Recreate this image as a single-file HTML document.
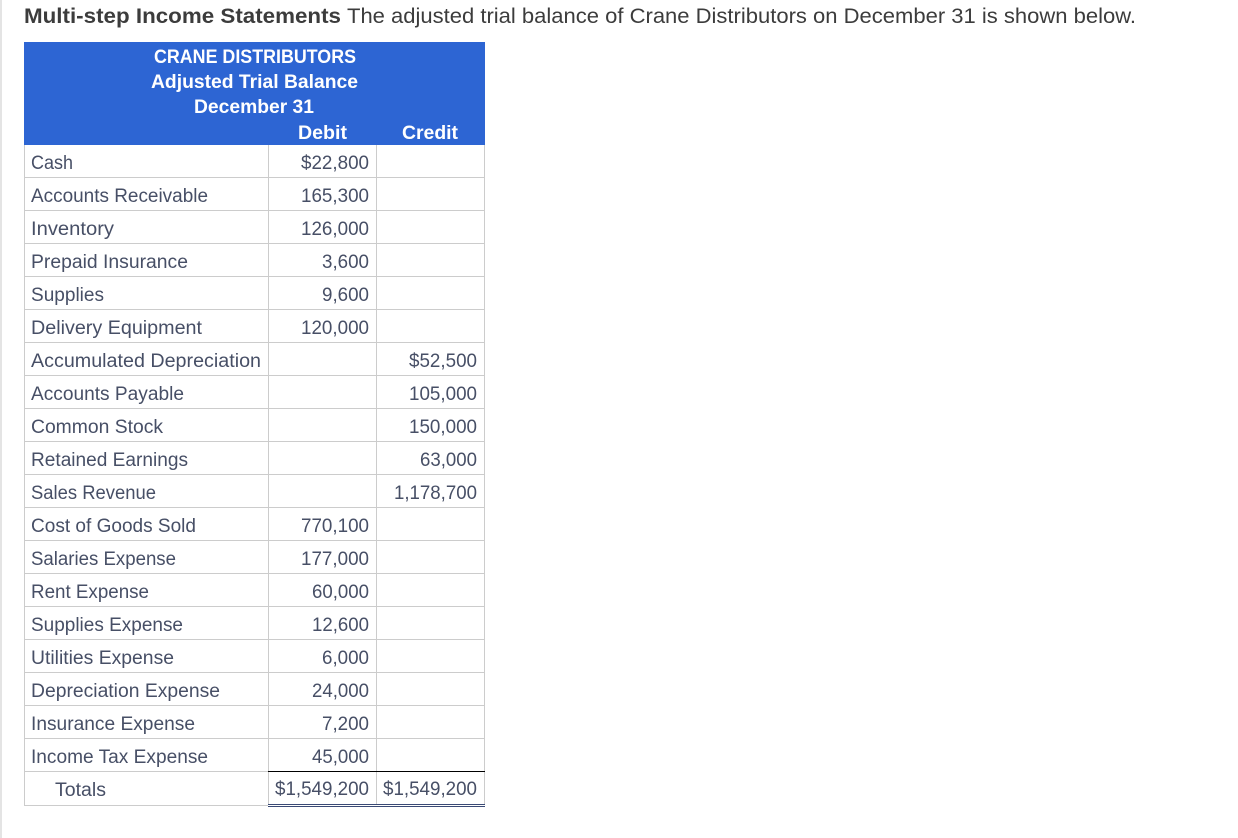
<!DOCTYPE html>
<html lang="en">
<head>
<meta charset="utf-8">
<title>Multi-step Income Statements</title>
<style>
html,body{margin:0;padding:0;background:#fff;width:1238px;height:838px;overflow:hidden}
svg{display:block;position:absolute;left:0;top:0}
text{font-family:"Liberation Sans",sans-serif;font-size:19px;fill:#474f66}
.t{font-size:21.5px;fill:#3c3c3c}
.h{font-size:19px;font-weight:bold;fill:#fff}
</style>
</head>
<body>
<svg width="1238" height="838" viewBox="0 0 1238 838" xmlns="http://www.w3.org/2000/svg">
<rect x="0" y="0" width="2" height="838" fill="#e4e4e4"/>

<text class="t" x="24" y="23" font-weight="bold" textLength="317" lengthAdjust="spacingAndGlyphs">Multi-step Income Statements</text>
<text class="t" x="347" y="23" textLength="789" lengthAdjust="spacingAndGlyphs">The adjusted trial balance of Crane Distributors on December 31 is shown below.</text>

<rect x="24" y="42" width="461" height="103" fill="#2d65d3"/>
<text class="h" x="154" y="63" textLength="202" lengthAdjust="spacingAndGlyphs">CRANE DISTRIBUTORS</text>
<text class="h" x="151" y="88" textLength="207" lengthAdjust="spacingAndGlyphs">Adjusted Trial Balance</text>
<text class="h" x="194" y="113" textLength="120" lengthAdjust="spacingAndGlyphs">December 31</text>
<text class="h" x="298" y="139" textLength="49" lengthAdjust="spacingAndGlyphs">Debit</text>
<text class="h" x="402" y="139" textLength="56" lengthAdjust="spacingAndGlyphs">Credit</text>

<g stroke="#cccccc" stroke-width="1" fill="none">
<path d="M24.5 145V805.5M268.5 145V805M376.5 145V805M484.5 145V805"/>
<path d="M24 177.5H485M24 210.5H485M24 243.5H485M24 276.5H485M24 309.5H485M24 342.5H485M24 375.5H485M24 408.5H485M24 441.5H485M24 474.5H485M24 507.5H485M24 540.5H485M24 573.5H485M24 606.5H485M24 639.5H485M24 672.5H485M24 705.5H485M24 738.5H485M24 771.5H268M24 805.5H268"/>
</g>
<path d="M268 771.5H485" stroke="#000" stroke-width="1"/>
<rect x="268" y="804" width="217" height="1" fill="#3a4a75"/>
<rect x="268" y="806" width="217" height="1" fill="#3a4a75"/>

<text x="31" y="169" textLength="42" lengthAdjust="spacingAndGlyphs">Cash</text>
<text x="31" y="202" textLength="177" lengthAdjust="spacingAndGlyphs">Accounts Receivable</text>
<text x="31" y="235" textLength="83" lengthAdjust="spacingAndGlyphs">Inventory</text>
<text x="31" y="268" textLength="157" lengthAdjust="spacingAndGlyphs">Prepaid Insurance</text>
<text x="31" y="301" textLength="73" lengthAdjust="spacingAndGlyphs">Supplies</text>
<text x="31" y="334" textLength="171" lengthAdjust="spacingAndGlyphs">Delivery Equipment</text>
<text x="31" y="367" textLength="230" lengthAdjust="spacingAndGlyphs">Accumulated Depreciation</text>
<text x="31" y="400" textLength="153" lengthAdjust="spacingAndGlyphs">Accounts Payable</text>
<text x="31" y="433" textLength="132" lengthAdjust="spacingAndGlyphs">Common Stock</text>
<text x="31" y="466" textLength="157" lengthAdjust="spacingAndGlyphs">Retained Earnings</text>
<text x="31" y="499" textLength="125" lengthAdjust="spacingAndGlyphs">Sales Revenue</text>
<text x="31" y="532" textLength="165" lengthAdjust="spacingAndGlyphs">Cost of Goods Sold</text>
<text x="31" y="565" textLength="145" lengthAdjust="spacingAndGlyphs">Salaries Expense</text>
<text x="31" y="598" textLength="118" lengthAdjust="spacingAndGlyphs">Rent Expense</text>
<text x="31" y="631" textLength="152" lengthAdjust="spacingAndGlyphs">Supplies Expense</text>
<text x="31" y="664" textLength="143" lengthAdjust="spacingAndGlyphs">Utilities Expense</text>
<text x="31" y="697" textLength="189" lengthAdjust="spacingAndGlyphs">Depreciation Expense</text>
<text x="31" y="730" textLength="164" lengthAdjust="spacingAndGlyphs">Insurance Expense</text>
<text x="31" y="763" textLength="177" lengthAdjust="spacingAndGlyphs">Income Tax Expense</text>
<text x="55" y="796" textLength="51" lengthAdjust="spacingAndGlyphs">Totals</text>

<text x="301" y="169" textLength="68" lengthAdjust="spacingAndGlyphs">$22,800</text>
<text x="301" y="202" textLength="68" lengthAdjust="spacingAndGlyphs">165,300</text>
<text x="301" y="235" textLength="68" lengthAdjust="spacingAndGlyphs">126,000</text>
<text x="322" y="268" textLength="47" lengthAdjust="spacingAndGlyphs">3,600</text>
<text x="322" y="301" textLength="47" lengthAdjust="spacingAndGlyphs">9,600</text>
<text x="301" y="334" textLength="68" lengthAdjust="spacingAndGlyphs">120,000</text>
<text x="409" y="367" textLength="68" lengthAdjust="spacingAndGlyphs">$52,500</text>
<text x="409" y="400" textLength="68" lengthAdjust="spacingAndGlyphs">105,000</text>
<text x="409" y="433" textLength="68" lengthAdjust="spacingAndGlyphs">150,000</text>
<text x="420" y="466" textLength="57" lengthAdjust="spacingAndGlyphs">63,000</text>
<text x="394" y="499" textLength="83" lengthAdjust="spacingAndGlyphs">1,178,700</text>
<text x="301" y="532" textLength="68" lengthAdjust="spacingAndGlyphs">770,100</text>
<text x="301" y="565" textLength="68" lengthAdjust="spacingAndGlyphs">177,000</text>
<text x="312" y="598" textLength="57" lengthAdjust="spacingAndGlyphs">60,000</text>
<text x="312" y="631" textLength="57" lengthAdjust="spacingAndGlyphs">12,600</text>
<text x="322" y="664" textLength="47" lengthAdjust="spacingAndGlyphs">6,000</text>
<text x="312" y="697" textLength="57" lengthAdjust="spacingAndGlyphs">24,000</text>
<text x="322" y="730" textLength="47" lengthAdjust="spacingAndGlyphs">7,200</text>
<text x="312" y="763" textLength="57" lengthAdjust="spacingAndGlyphs">45,000</text>
<text x="275" y="795" textLength="94" lengthAdjust="spacingAndGlyphs">$1,549,200</text>
<text x="383" y="795" textLength="94" lengthAdjust="spacingAndGlyphs">$1,549,200</text>
</svg>
</body>
</html>
